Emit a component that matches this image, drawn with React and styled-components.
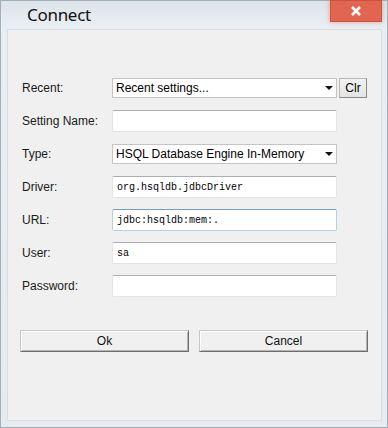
import React from "react";
import styled, { createGlobalStyle, css } from "styled-components";

const GlobalStyle = createGlobalStyle`
  html, body {
    margin: 0;
    padding: 0;
    background: #e6ebf0;
  }
  * {
    box-sizing: border-box;
  }
`;

const Frame = styled.div`
  width: 388px;
  height: 428px;
  display: flex;
  flex-direction: column;
  background: linear-gradient(180deg, #dde4ea 0%, #e9eef2 6%, #e6ebf0 100%);
  border: 1px solid #a4aeb8;
  font-family: "Liberation Sans", Arial, sans-serif;
`;

const TitleBar = styled.div`
  height: 28px;
  display: flex;
  align-items: flex-start;
  justify-content: space-between;
  padding-left: 26px;
`;

const Title = styled.div`
  font-family: "Noto Sans", "Open Sans", sans-serif;
  font-size: 17px;
  letter-spacing: -0.3px;
  color: #111;
  line-height: 26px;
  margin-top: 1px;
`;

const CloseButton = styled.div`
  width: 52px;
  height: 22px;
  margin-right: 5px;
  margin-top: -1px;
  background: #e2654f;
  border: 1px solid #c9533f;
  box-shadow: 0 0 5px rgba(226, 101, 79, 0.55);
  display: flex;
  align-items: center;
  justify-content: center;
`;

const Client = styled.div`
  flex: 1;
  margin: 0 5px 6px 6px;
  background: #f0f0f0;
  border: 1px solid #d7dde3;
  padding: 47px 0 0 14px;
  display: flex;
  flex-direction: column;
`;

const Form = styled.div`
  display: grid;
  grid-template-columns: 90px 225px 30px;
  grid-auto-rows: 22px;
  row-gap: 11px;
  align-items: center;
`;

const Label = styled.div`
  font-size: 12px;
  color: #1a1a1a;
`;

const fieldBase = css`
  height: 22px;
  background: #fff;
  display: flex;
  align-items: center;
  padding-left: 3px;
  border-radius: 2px;
`;

const TextField = styled.div`
  ${fieldBase}
  padding-left: 4px;
  font-family: "Liberation Mono", "DejaVu Sans Mono", monospace;
  font-size: 10px;
  color: #000;
  border: 1px solid ${(p) => (p.focused ? "#b6d2e2" : "#e1e4e8")};
  border-top-color: ${(p) => (p.focused ? "#6f9fc0" : "#acaeb4")};
`;

const Combo = styled.div`
  ${fieldBase}
  height: 20px;
  justify-content: space-between;
  padding-right: 3px;
  font-size: 12px;
  color: #000;
  border: 1px solid #c4c4c4;
  border-radius: 0;
`;

const Arrow = styled.span`
  width: 0;
  height: 0;
  border-left: 4px solid transparent;
  border-right: 4px solid transparent;
  border-top: 4px solid #111;
`;

const ClrButton = styled.div`
  margin-left: 2px;
  width: 28px;
  height: 20px;
  font-size: 12px;
  color: #000;
  display: flex;
  align-items: center;
  justify-content: center;
  background: linear-gradient(180deg, #f2f2f2 0%, #e4e4e4 100%);
  border: 1px solid #b8b8b8;
  border-right-color: #8a8a8a;
  border-bottom-color: #8a8a8a;
`;

const ButtonRow = styled.div`
  display: flex;
  gap: 10px;
  margin-top: 33px;
  margin-left: -2px;
`;

const DialogButton = styled.div`
  width: 169px;
  height: 22px;
  display: flex;
  align-items: center;
  justify-content: center;
  font-size: 12px;
  color: #111;
  background: #f0f0f0;
  border: 1px solid #c8c8c8;
  border-right-color: #6e6e6e;
  border-bottom-color: #6e6e6e;
  box-shadow: inset 1px 1px 0 #fff, inset -1px -1px 0 #b4b4b4;
`;

const fields = [
  { label: "Driver:", value: "org.hsqldb.jdbcDriver" },
  { label: "URL:", value: "jdbc:hsqldb:mem:.", focused: true },
  { label: "User:", value: "sa" },
  { label: "Password:", value: "" },
];

const App = () => (
  <>
    <GlobalStyle />
    <Frame>
      <TitleBar>
        <Title>Connect</Title>
        <CloseButton>
          <svg width="12" height="10" viewBox="0 0 12 10">
            <path d="M2 1 L10 9 M10 1 L2 9" stroke="#fff" strokeWidth="2.6" />
          </svg>
        </CloseButton>
      </TitleBar>
      <Client>
        <Form>
          <Label>Recent:</Label>
          <Combo>
            Recent settings...
            <Arrow />
          </Combo>
          <ClrButton>Clr</ClrButton>

          <Label>Setting Name:</Label>
          <TextField />
          <span />

          <Label>Type:</Label>
          <Combo>
            HSQL Database Engine In-Memory
            <Arrow />
          </Combo>
          <span />

          {fields.map((f) => (
            <React.Fragment key={f.label}>
              <Label>{f.label}</Label>
              <TextField focused={f.focused}>{f.value}</TextField>
              <span />
            </React.Fragment>
          ))}
        </Form>
        <ButtonRow>
          <DialogButton>Ok</DialogButton>
          <DialogButton>Cancel</DialogButton>
        </ButtonRow>
      </Client>
    </Frame>
  </>
);

export default App;
